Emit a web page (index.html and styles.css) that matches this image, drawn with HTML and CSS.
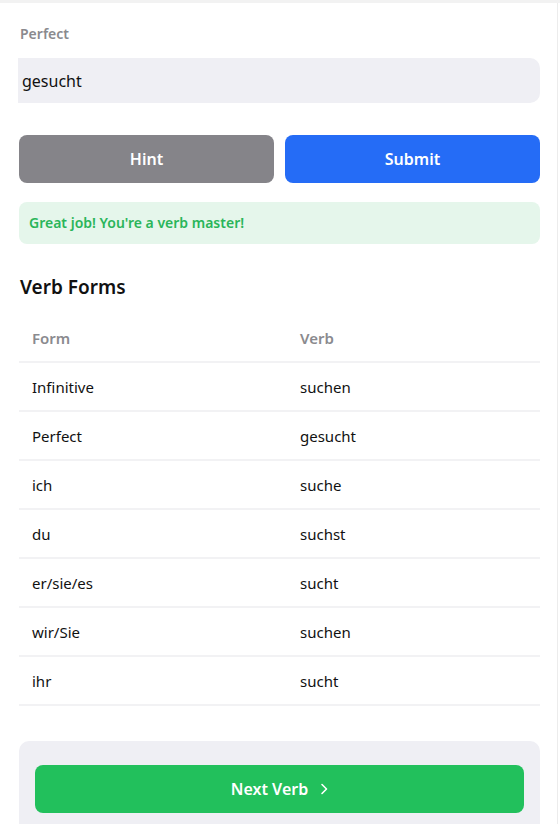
FILE: index.html
```html
<!DOCTYPE html>
<html>
<head>
<meta charset="utf-8">
<link rel="stylesheet" href="styles.css">
</head>
<body>
<div class="page">
  <div class="field">
    <label class="label">Perfect</label>
    <div class="input">gesucht</div>
  </div>
  <div class="actions">
    <button class="btn btn-hint">Hint</button>
    <button class="btn btn-submit">Submit</button>
  </div>
  <div class="success">Great job! You're a verb master!</div>
  <h2 class="heading">Verb Forms</h2>
  <div class="table">
    <div class="row head"><div class="cell">Form</div><div class="cell">Verb</div></div>
    <div class="row"><div class="cell">Infinitive</div><div class="cell">suchen</div></div>
    <div class="row"><div class="cell">Perfect</div><div class="cell">gesucht</div></div>
    <div class="row"><div class="cell">ich</div><div class="cell">suche</div></div>
    <div class="row"><div class="cell">du</div><div class="cell">suchst</div></div>
    <div class="row"><div class="cell">er/sie/es</div><div class="cell">sucht</div></div>
    <div class="row"><div class="cell">wir/Sie</div><div class="cell">suchen</div></div>
    <div class="row"><div class="cell">ihr</div><div class="cell">sucht</div></div>
  </div>
  <div class="footer">
    <button class="btn btn-next">Next Verb
      <svg class="chev" width="8" height="12" viewBox="0 0 8 12"><path d="M2 1.5 L6.5 6 L2 10.5" fill="none" stroke="#fff" stroke-width="1.6" stroke-linecap="round" stroke-linejoin="round"/></svg>
    </button>
  </div>
</div>
</body>
</html>
```

FILE: styles.css
```css
html, body {
  margin: 0;
  padding: 0;
  background: #ffffff;
}
body {
  font-family: "Noto Sans", "Open Sans", sans-serif;
  color: #111;
  border-top: 3px solid #f2f2f2;
}
.page {
  width: 558px;
  box-sizing: border-box;
  border-right: 1px solid #ececec;
  padding: 0 17px 0 19px;
  min-height: 821px;
}
.field {
  padding-top: 21px;
}
.label {
  display: block;
  font-size: 14px;
  font-weight: 600;
  color: #8a8a8e;
  line-height: 20px;
  margin: 0 0 14px 1px;
}
.input {
  margin-left: -1px;
  height: 45px;
  box-sizing: border-box;
  background: #efeff4;
  border-radius: 0 10px 10px 0;
  padding: 1px 4px 0;
  font-size: 16px;
  line-height: 44px;
  color: #111;
}
.actions {
  display: flex;
  gap: 11px;
  margin-top: 32px;
}
.btn {
  border: none;
  font-family: inherit;
  font-size: 16px;
  font-weight: 600;
  color: #fff;
  border-radius: 8px;
  height: 48px;
  cursor: pointer;
}
.actions .btn { flex: 1; }
.btn-hint { background: #858489; }
.btn-submit { background: #256cf6; }
.success {
  margin-top: 19px;
  height: 42px;
  box-sizing: border-box;
  background: #e5f6eb;
  border-radius: 8px;
  color: #2ab55a;
  font-size: 14px;
  font-weight: 600;
  line-height: 42px;
  padding: 0 10px;
}
.heading {
  margin: 30px 0 0 1px;
  font-size: 19px;
  font-weight: 600;
  line-height: 26px;
  color: #111;
}
.table {
  margin-top: 14px;
}
.row {
  display: grid;
  grid-template-columns: 268px 1fr;
  height: 49px;
  border-bottom: 2px solid #f2f2f4;
  box-sizing: border-box;
  align-items: center;
  font-size: 15px;
  color: #111;
}
.cell {
  padding: 0 13px;
}
.row.head {
  color: #8a8a8e;
  font-weight: 600;
}
.footer {
  margin-top: 35px;
  background: #efeff4;
  border-radius: 10px 10px 0 0;
  padding: 24px 16px 16px;
}
.btn-next {
  width: 100%;
  background: #22c05c;
  display: flex;
  align-items: center;
  justify-content: center;
  gap: 12px;
}
.chev { display: block; }
```
